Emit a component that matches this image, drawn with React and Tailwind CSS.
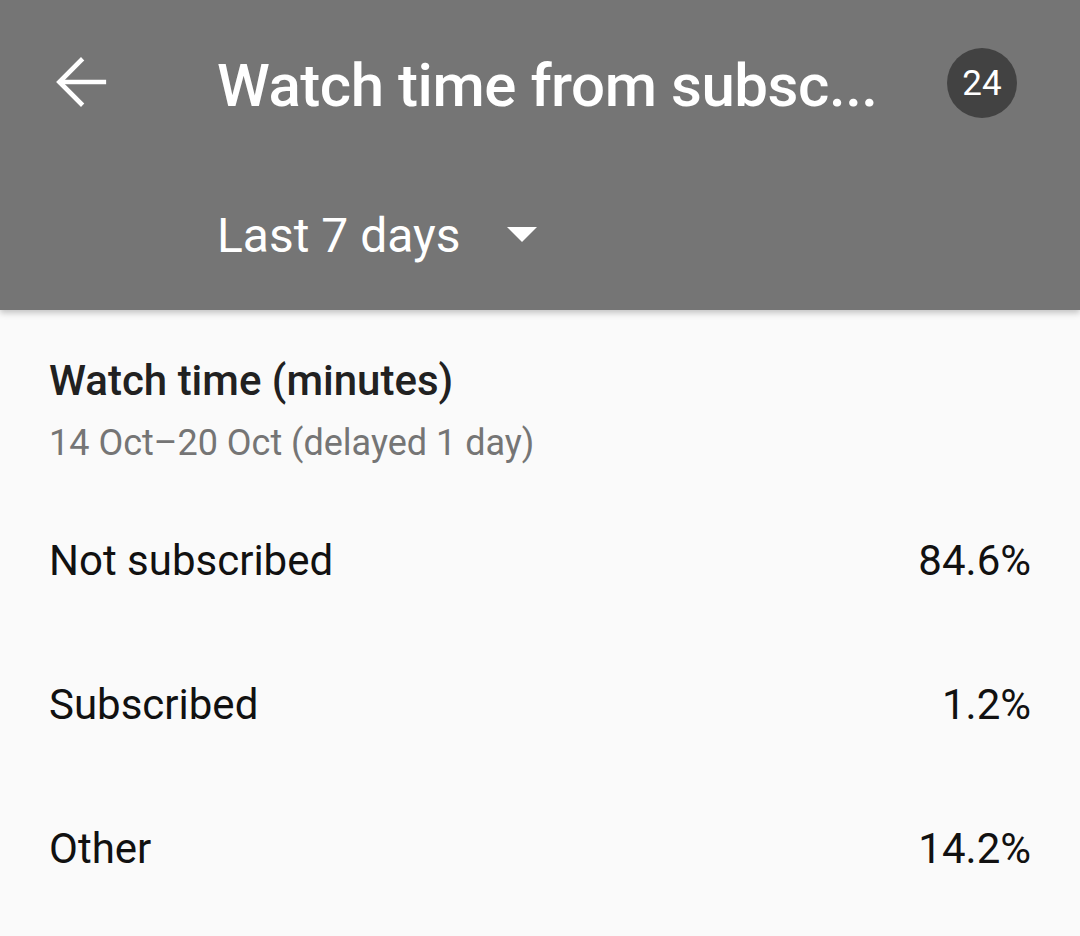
import React from 'react';

const rows = [
    { label: 'Not subscribed', value: '84.6%' },
    { label: 'Subscribed', value: '1.2%' },
    { label: 'Other', value: '14.2%' },
];

const BackArrow = () => (
    <svg viewBox="0 0 24 24" className="w-[72px] h-[72px]" fill="none" stroke="white" strokeWidth="1.55" strokeLinecap="square">
        <path d="M19.6 12H5.4" />
        <path d="M12 4.8L4.8 12L12 19.2" />
    </svg>
);

const DropDown = () => (
    <svg viewBox="0 0 24 24" className="w-[72px] h-[72px]" fill="white">
        <path d="M7 10l5 5 5-5z" />
    </svg>
);

const App = () => {
    return (
        <div className="w-[1080px] h-[936px] bg-[#fafafa] overflow-hidden font-['Roboto',sans-serif]">
            <header className="relative z-10 h-[310px] bg-[#757575] shadow-[0_3px_6px_rgba(0,0,0,0.22)]">
                <div className="flex items-center h-[168px]">
                    <div className="ml-[45px] mt-[-4px]">
                        <BackArrow />
                    </div>
                    <h1 className="ml-[100px] mt-[4px] whitespace-nowrap text-[60px] leading-[72px] tracking-[-0.45px] font-medium text-white">
                        Watch time from subsc...
                    </h1>
                    <div className="ml-auto mr-[63px] mt-[-2px] w-[70px] h-[70px] shrink-0 rounded-full bg-[#424242] flex items-center justify-center text-white text-[35px] leading-none">
                        24
                    </div>
                </div>
                <div className="flex items-center h-[56px] mt-[40px] pl-[217px]">
                    <span className="text-[48px] leading-[56px] text-white">Last 7 days</span>
                    <div className="ml-[25px] mt-[-6px]">
                        <DropDown />
                    </div>
                </div>
            </header>

            <main className="px-[49px] pt-[47px]">
                <h2 className="text-[42px] leading-[48px] font-medium text-[#212121]">Watch time (minutes)</h2>
                <p className="mt-[14px] text-[36px] leading-[48px] text-[#757575]">14 Oct–20 Oct (delayed 1 day)</p>
                <div className="mt-[22px]">
                    {rows.map((row) => (
                        <div key={row.label} className="flex items-center justify-between h-[144px] text-[42px] leading-[48px] text-[#111111]">
                            <span>{row.label}</span>
                            <span>{row.value}</span>
                        </div>
                    ))}
                </div>
            </main>
        </div>
    );
};

export default App;
